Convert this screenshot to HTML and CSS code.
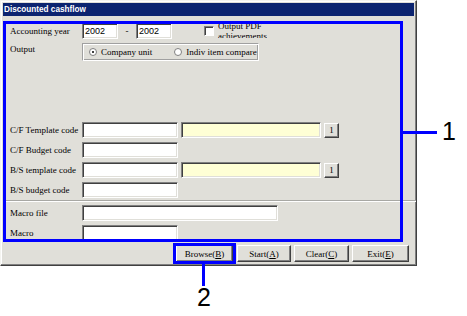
FILE: index.html
```html
<!DOCTYPE html>
<html>
<head>
<meta charset="utf-8">
<title>Discounted cashflow</title>
<link rel="stylesheet" href="styles.css">
</head>
<body>
<div class="window">
  <div class="titlebar">Discounted cashflow</div>
  <div class="content">
    <div class="row">
      <div class="label">Accounting year</div>
      <div class="edit year">2002</div>
      <div class="dash">-</div>
      <div class="edit year">2002</div>
      <div class="check">
        <span class="checkbox"></span>
        <span class="check-text">Output PDF<br>achievements</span>
      </div>
    </div>
    <div class="row row-output">
      <div class="label label-top">Output</div>
      <div class="group">
        <span class="radio on"></span><span class="opt">Company unit</span>
        <span class="radio"></span><span class="opt">Indiv item compare</span>
      </div>
    </div>

    <div class="fields">
      <div class="row">
        <div class="label">C/F Template code</div>
        <div class="edit code"></div>
        <div class="edit name"></div>
        <div class="btn pick">1</div>
      </div>
      <div class="row">
        <div class="label">C/F Budget code</div>
        <div class="edit code"></div>
      </div>
      <div class="row">
        <div class="label">B/S template code</div>
        <div class="edit code"></div>
        <div class="edit name"></div>
        <div class="btn pick">1</div>
      </div>
      <div class="row">
        <div class="label">B/S budget code</div>
        <div class="edit code"></div>
      </div>
    </div>

    <div class="sep"></div>

    <div class="fields fields-macro">
      <div class="row">
        <div class="label">Macro file</div>
        <div class="edit file"></div>
      </div>
      <div class="row">
        <div class="label">Macro</div>
        <div class="edit code"></div>
      </div>
    </div>
  </div>

  <div class="buttons">
    <div class="btn cmd browse">Browse(<u>B</u>)</div>
    <div class="btn cmd start">Start(<u>A</u>)</div>
    <div class="btn cmd clear">Clear(<u>C</u>)</div>
    <div class="btn cmd exit">Exit(<u>E</u>)</div>
  </div>
</div>

<!-- callouts drawn over the screenshot -->
<div class="mark mark-form"></div>
<div class="lead lead-1"></div>
<div class="num num-1">1</div>
<div class="mark mark-browse"></div>
<div class="lead lead-2"></div>
<div class="num num-2">2</div>
</body>
</html>
```

FILE: styles.css
```css
* {
    box-sizing: border-box;
}
body {
    margin: 0;
    width: 467px;
    height: 316px;
    overflow: hidden;
    position: relative;
    background: #ffffff;
    color: #000000;
    font-family: "Liberation Serif", serif;
    font-size: 9px;
}

/* dialog window */
.window {
    width: 417px;
    height: 266px;
    padding: 2px;
    background: #e0dfd9;
    border: 1px solid;
    border-color: #f4f4f0 #404040 #404040 #f4f4f0;
    box-shadow: inset -1px -1px 0 #808080, inset 1px 1px 0 #ffffff;
    display: flex;
    flex-direction: column;
}
.titlebar {
    height: 13px;
    line-height: 13px;
    padding-left: 1px;
    background: #0c2470;
    color: #ffffff;
    font-family: "Liberation Sans", sans-serif;
    font-weight: bold;
    font-size: 8.2px;
}
.content {
    padding: 7px 0 0 7px;
    display: flex;
    flex-direction: column;
}
.row {
    display: flex;
    align-items: center;
    height: 16px;
}
.label {
    width: 72px;
    flex: none;
    white-space: nowrap;
}
.label-top {
    align-self: flex-start;
    padding-top: 1px;
}

/* sunken edit boxes */
.edit {
    height: 16px;
    flex: none;
    padding: 2px 0 0 2px;
    background: #ffffff;
    border: 1px solid;
    border-color: #808080 #ffffff #ffffff #808080;
    box-shadow: inset 1px 1px 0 #404040, inset -1px -1px 0 #e0dfd9;
    font-family: "Liberation Sans", sans-serif;
    font-size: 9px;
    line-height: 11px;
}
.year {
    width: 36px;
}
.dash {
    width: 18px;
    text-align: center;
}
.code {
    width: 96px;
}
.name {
    width: 140px;
    margin-left: 3px;
    background: #ffffd5;
}
.file {
    width: 196px;
}

.check {
    display: flex;
    align-items: center;
    height: 14px;
    margin-left: 32px;
    overflow: hidden;
}
.checkbox {
    width: 10px;
    height: 10px;
    flex: none;
    background: #ffffff;
    border: 1px solid;
    border-color: #808080 #ffffff #ffffff #808080;
    box-shadow: inset 1px 1px 0 #404040;
}
.check-text {
    margin-left: 4px;
    line-height: 10px;
    white-space: nowrap;
}

/* radio group */
.row-output {
    height: 18px;
    margin-top: 4px;
    align-items: stretch;
}
.group {
    width: 177px;
    flex: none;
    display: flex;
    align-items: center;
    padding-left: 6px;
    border: 1px solid;
    border-color: #a0a0a0 #ffffff #ffffff #a0a0a0;
    box-shadow: inset 1px 1px 0 #ffffff, inset -1px -1px 0 #a0a0a0;
}
.radio {
    width: 8px;
    height: 8px;
    flex: none;
    border-radius: 50%;
    background: #ffffff;
    border: 1px solid #808080;
    position: relative;
}
.radio.on::after {
    content: "";
    position: absolute;
    left: 2px;
    top: 2px;
    width: 2px;
    height: 2px;
    border-radius: 50%;
    background: #000000;
}
.opt {
    flex: none;
    white-space: nowrap;
    margin-left: 4px;
    margin-right: 22px;
}

.fields {
    margin-top: 61px;
    display: flex;
    flex-direction: column;
    gap: 4px;
}
.fields-macro {
    margin-top: 3px;
}
.sep {
    margin: 2px 0 0 -4px;
    width: 410px;
    height: 2px;
    border-top: 1px solid #a8a8a4;
    border-bottom: 1px solid #ffffff;
}

/* raised buttons */
.btn {
    display: flex;
    align-items: center;
    justify-content: center;
    background: #e0dfd9;
    border: 1px solid;
    border-color: #ffffff #404040 #404040 #ffffff;
    box-shadow: inset -1px -1px 0 #808080;
    white-space: nowrap;
}
.pick {
    width: 15px;
    height: 15px;
    margin-left: 3px;
}
.buttons {
    margin-top: 4px;
    padding-right: 5px;
    display: flex;
    justify-content: flex-end;
    gap: 3px;
}
.cmd {
    height: 17px;
}
.browse {
    width: 57px;
    margin-right: 1px;
}
.start {
    width: 54px;
}
.clear {
    width: 55px;
}
.exit {
    width: 57px;
}

/* annotation callouts */
.mark {
    position: absolute;
    border: 3px solid #0000ff;
}
.mark-form {
    left: 3px;
    top: 21px;
    width: 400px;
    height: 221px;
}
.mark-browse {
    left: 173px;
    top: 243px;
    width: 63px;
    height: 21px;
}
.lead {
    position: absolute;
    background: #0000ff;
}
.lead-1 {
    left: 403px;
    top: 131px;
    width: 34px;
    height: 3px;
}
.lead-2 {
    left: 202px;
    top: 264px;
    width: 3px;
    height: 22px;
}
.num {
    position: absolute;
    font-family: "Liberation Sans", sans-serif;
    font-size: 25px;
    line-height: 25px;
}
.num-1 {
    left: 442px;
    top: 119px;
}
.num-2 {
    left: 197px;
    top: 285px;
}
```
